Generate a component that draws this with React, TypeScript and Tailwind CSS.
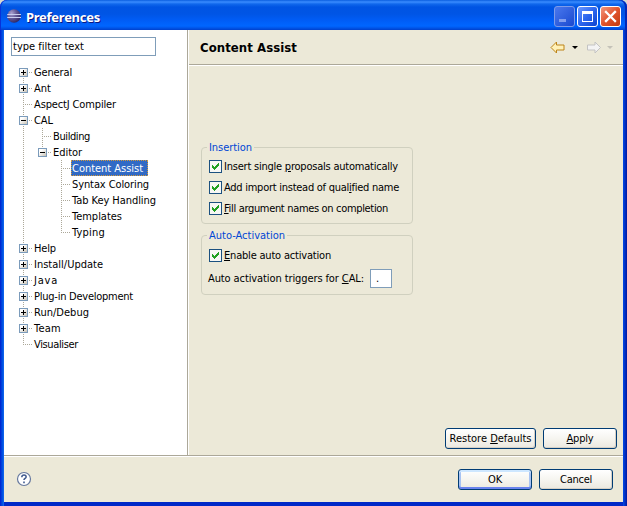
import { useLayoutEffect, useRef, useState } from 'react';
import type { ReactNode } from 'react';

const UI_FONT = "font-['DejaVu_Sans_Condensed','DejaVu_Sans',sans-serif] [font-stretch:condensed]";

/** A single line of text whose tracking is fitted to the requested width. */
function Fit({ width, children, className = '' }: { width: number; children: ReactNode; className?: string }) {
  const ref = useRef<HTMLSpanElement>(null);
  const [spacing, setSpacing] = useState(0);
  useLayoutEffect(() => {
    const el = ref.current;
    if (!el) return;
    const count = (el.textContent ?? '').length;
    setSpacing((width - el.getBoundingClientRect().width) / count);
  }, [width]);
  return (
    <span ref={ref} className={`inline-block whitespace-nowrap ${className}`} style={{ letterSpacing: spacing }}>
      {children}
    </span>
  );
}

type Guide = 'none' | 'line' | 'tee' | 'end';
type Node = { label: string; width: number; guides: Guide[]; box?: '+' | '-'; first?: boolean; selected?: boolean };

const nodes: Node[] = [
  { label: 'General', width: 38, guides: ['tee'], box: '+', first: true },
  { label: 'Ant', width: 17, guides: ['tee'], box: '+' },
  { label: 'AspectJ Compiler', width: 82, guides: ['tee'] },
  { label: 'CAL', width: 19, guides: ['tee'], box: '-' },
  { label: 'Building', width: 37, guides: ['line', 'tee'] },
  { label: 'Editor', width: 29, guides: ['line', 'end'], box: '-' },
  { label: 'Content Assist', width: 71, guides: ['line', 'none', 'tee'], selected: true },
  { label: 'Syntax Coloring', width: 77, guides: ['line', 'none', 'tee'] },
  { label: 'Tab Key Handling', width: 84, guides: ['line', 'none', 'tee'] },
  { label: 'Templates', width: 50, guides: ['line', 'none', 'tee'] },
  { label: 'Typing', width: 33, guides: ['line', 'none', 'end'] },
  { label: 'Help', width: 22, guides: ['tee'], box: '+' },
  { label: 'Install/Update', width: 69, guides: ['tee'], box: '+' },
  { label: 'Java', width: 24, guides: ['tee'], box: '+' },
  { label: 'Plug-in Development', width: 99, guides: ['tee'], box: '+' },
  { label: 'Run/Debug', width: 55, guides: ['tee'], box: '+' },
  { label: 'Team', width: 27, guides: ['tee'], box: '+' },
  { label: 'Visualiser', width: 44, guides: ['end'] },
];

function GuideCell({ kind, box, first }: { kind: Guide; box?: '+' | '-'; first?: boolean }) {
  return (
    <svg className="h-4 w-[19px] shrink-0" viewBox="0 0 19 16" shapeRendering="crispEdges">
      <defs>
        <linearGradient id="expander" x1="0" y1="0" x2="1" y2="1">
          <stop offset="0.3" stopColor="#fff" />
          <stop offset="1" stopColor="#c3bcae" />
        </linearGradient>
      </defs>
      {kind !== 'none' && (
        <g stroke="#aca899" strokeDasharray="1 1">
          <path d={`M9.5 ${first ? 8 : 0}V${kind === 'end' ? 9 : 16}`} />
          {kind !== 'line' && <path d="M9 8.5H18" />}
        </g>
      )}
      {box && (
        <>
          <rect x="5.5" y="4.5" width="8" height="8" fill="url(#expander)" stroke="#7b9bbb" />
          <path d={box === '+' ? 'M7 8.5H12M9.5 6V11' : 'M7 8.5H12'} stroke="#000" />
        </>
      )}
    </svg>
  );
}

function TreeRow({ node }: { node: Node }) {
  return (
    <div className="flex h-4 items-center">
      {node.guides.map((g, i) => {
        const last = i === node.guides.length - 1;
        return <GuideCell key={i} kind={g} box={last ? node.box : undefined} first={node.first} />;
      })}
      <span
        className={`flex h-4 items-center pt-px pl-px ${
          node.selected ? 'w-[77px] bg-[#316ac5] text-white outline-1 -outline-offset-1 outline-dotted outline-[#d59a3a]' : ''
        }`}
      >
        <Fit width={node.width}>{node.label}</Fit>
      </span>
    </div>
  );
}

function Check({ width, children }: { width: number; children: ReactNode }) {
  return (
    <div className="flex h-[13px] items-center gap-[2px]">
      <svg className="size-[13px] shrink-0" viewBox="0 0 13 13" shapeRendering="crispEdges">
        <rect x=".5" y=".5" width="12" height="12" fill="#f7f7f4" stroke="#1c5180" />
        <path d="M3 5h1v1h1v1h1V6h1V5h1V4h1V3h1v3H9v1H8v1H7v1H6v1H5V9H4V8H3z" fill="#21a121" />
      </svg>
      <Fit width={width}>{children}</Fit>
    </div>
  );
}

function Group({ title, width, className, children }: { title: string; width: number; className: string; children: ReactNode }) {
  return (
    <section className={`w-[212px] rounded-[4px] border border-[#d0d0bf] px-[7px] ${className}`}>
      <h2 className="-mt-[8px] -ml-[2px] flex h-4 w-fit items-center bg-[#ece9d8] px-[2px] text-[#0046d5]">
        <Fit width={width}>{title}</Fit>
      </h2>
      {children}
    </section>
  );
}

function Button({ width, className, primary, children }: { width: number; className: string; primary?: boolean; children: ReactNode }) {
  return (
    <button
      className={`flex h-[21px] items-center justify-center rounded-[3px] border border-[#003c74] bg-linear-to-b from-white via-[#f6f5f0] to-[#ebe8df] ${
        primary
          ? 'shadow-[inset_0_-2px_0_#6982ee,inset_0_2px_0_#cee7ff,inset_2px_0_0_#a8c3f2,inset_-2px_0_0_#a8c3f2]'
          : 'shadow-[inset_-1px_-1px_0_#d6d0c5]'
      } ${className}`}
    >
      <Fit width={width}>{children}</Fit>
    </button>
  );
}

function U({ children }: { children: ReactNode }) {
  return <span className="underline decoration-1 underline-offset-[1px]">{children}</span>;
}

function CaptionButton({ kind }: { kind: 'min' | 'max' | 'close' }) {
  const skin = {
    min: 'border-[#7e9be9] bg-linear-to-br from-[#4a78ee] to-[#1a48cf]',
    max: 'border-white bg-linear-to-br from-[#6c98ff] via-[#2d66ee] to-[#0b43cf]',
    close: 'border-white bg-linear-to-br from-[#f1957c] via-[#e1532b] to-[#c23a0c]',
  }[kind];
  return (
    <div className={`size-[21px] rounded-[3px] border ${skin}`}>
      <svg className="size-[19px]" viewBox="0 0 19 19" shapeRendering={kind === 'close' ? 'auto' : 'crispEdges'}>
        {kind === 'min' && <path d="M4 12h7v3H4z" fill="#829eee" />}
        {kind === 'max' && <path fillRule="evenodd" d="M4 4h11v11H4zM5 7h9v7H5z" fill="#fff" />}
        {kind === 'close' && <path d="M5 5l9 9M14 5l-9 9" stroke="#fff" strokeWidth="2.3" strokeLinecap="square" />}
      </svg>
    </div>
  );
}

export default function App() {
  return (
    <div className="h-[506px] w-[627px] overflow-hidden bg-[#d8d8cf]">
      <div className={`flex h-[506px] w-[627px] flex-col rounded-t-[7px] bg-[#0831d9] text-[11px] leading-4 text-black ${UI_FONT}`}>
        <header className="flex h-[30px] shrink-0 items-center rounded-t-[7px] bg-[linear-gradient(180deg,#0a5ee0_0,#3a8cff_2px,#1068ec_4px,#0054e3_7px,#0055e5_14px,#005cf5_20px,#0066ff_26px,#0055e8_28px,#0040cc_30px)] pr-[6px] pl-[6px] shadow-[inset_1px_0_0_#0831d9,inset_-2px_0_0_#0029b8]">
          <svg className="mt-[2px] size-4" viewBox="0 0 16 16">
            <defs>
              <radialGradient id="globe" cx=".32" cy=".3" r=".8">
                <stop offset="0" stopColor="#aaa2d0" />
                <stop offset=".45" stopColor="#655b98" />
                <stop offset="1" stopColor="#29205e" />
              </radialGradient>
            </defs>
            <circle cx="8" cy="8" r="6.7" fill="url(#globe)" />
            <path d="M1.2 6.5H15M1.2 9.500H15" stroke="#c9cdf0" strokeWidth="1" />
          </svg>
          <h1 className="mt-[4px] ml-[4px] font-['Noto_Sans',sans-serif] text-[13px] font-bold text-white [text-shadow:1px_1px_0_#0a1883]">
            <Fit width={74}>Preferences</Fit>
          </h1>
          <div className="mt-[3px] ml-auto flex gap-[2px]">
            <CaptionButton kind="min" />
            <CaptionButton kind="max" />
            <CaptionButton kind="close" />
          </div>
        </header>

        <div className="flex min-h-0 flex-1 bg-linear-to-r from-[#0019cf] to-[#166aee] to-[4px]">
          <div className="w-[4px] shrink-0" />
          <div className="flex min-w-0 flex-1 flex-col border-b-4 border-b-[#0029c8] bg-[#ece9d8]">
            <div className="flex h-[425px] shrink-0">
              <aside className="w-[184px] shrink-0 border-r border-[#aca899] bg-white">
                <div className="mt-[7px] ml-[7px] flex h-[19px] w-[145px] items-center border border-[#7f9db9] pt-px pl-[1px]">
                  <Fit width={71}>type filter text</Fit>
                </div>
                <nav className="mt-[8px] ml-[10px]">
                  {nodes.map((n) => (
                    <TreeRow key={n.label} node={n} />
                  ))}
                </nav>
              </aside>
              <main className="flex flex-1 flex-col border-l border-white">
                <div className="flex h-[35px] shrink-0 items-center border-b border-[#aca899] pl-[11px] shadow-[0_1px_0_white]">
                  <h2 className="mt-[2px] text-[13px] font-bold">
                    <Fit width={97}>Content Assist</Fit>
                  </h2>
                  <svg className="mr-[8px] ml-auto h-4 w-[66px]" viewBox="0 0 66 16">
                    <path d="M2 8.500L7.500 3v3H15v5H7.500v3z" fill="#fff1b8" stroke="#bd8418" />
                    <path d="M23 7h6l-3 3z" fill="#000" />
                    <path d="M51.500 8.500L46 3v3h-7.500v5H46v3z" fill="#f3f3f3" stroke="#c3c3c3" />
                    <path d="M58 7h6l-3 3z" fill="#c4c2b8" />
                  </svg>
                </div>
                <div className="flex-1 px-[12px] pt-[82px]">
                  <Group title="Insertion" width={43} className="h-[77px]">
                    <div className="mt-[4px] flex flex-col gap-[8px]">
                      <Check width={174}>Insert single <U>p</U>roposals automatically</Check>
                      <Check width={175}>Add import instead of qual<U>i</U>fied name</Check>
                      <Check width={164}><U>F</U>ill argument names on completion</Check>
                    </div>
                  </Group>
                  <Group title="Auto-Activation" width={76} className="mt-[11px] h-[60px]">
                    <div className="mt-[5px]">
                      <Check width={107}><U>E</U>nable auto activation</Check>
                    </div>
                    <div className="mt-[7px] flex items-center">
                      <Fit width={156} className="-ml-px">Auto activation triggers for <U>C</U>AL:</Fit>
                      <span className="ml-[6px] flex h-[19px] w-[22px] items-center border border-[#7f9db9] bg-white pt-px pl-[5px]">.</span>
                    </div>
                  </Group>
                </div>
                <div className="mb-[6px] flex justify-end gap-[7px] pr-[6px]">
                  <Button className="w-[91px]" width={82}>Restore <U>D</U>efaults</Button>
                  <Button className="w-[74px]" width={27}><U>A</U>pply</Button>
                </div>
              </main>
            </div>
            <footer className="flex flex-1 items-start border-t border-[#aca899] pt-[13px] pr-[10px] pl-[12px] shadow-[inset_0_1px_0_white]">
              <svg className="mt-[2px] size-4" viewBox="0 0 16 16">
                <circle cx="8" cy="8" r="6.500" fill="#fff" stroke="#66799e" strokeWidth="1.200" />
                <path d="M5.800 6.200c.1-3 4.400-2.800 4.300-.3 0 1.500-2.100 1.500-2.100 3.200M8 10.600v1.600" fill="none" stroke="#405a8e" strokeWidth="1.600" />
              </svg>
              <div className="ml-auto flex gap-[7px]">
                <Button className="w-[74px]" width={14} primary>OK</Button>
                <Button className="w-[74px]" width={32}>Cancel</Button>
              </div>
            </footer>
          </div>
          <div className="w-[4px] shrink-0 bg-linear-to-r from-[#0048e8] to-[#0016a0]" />
        </div>
      </div>
    </div>
  );
}
